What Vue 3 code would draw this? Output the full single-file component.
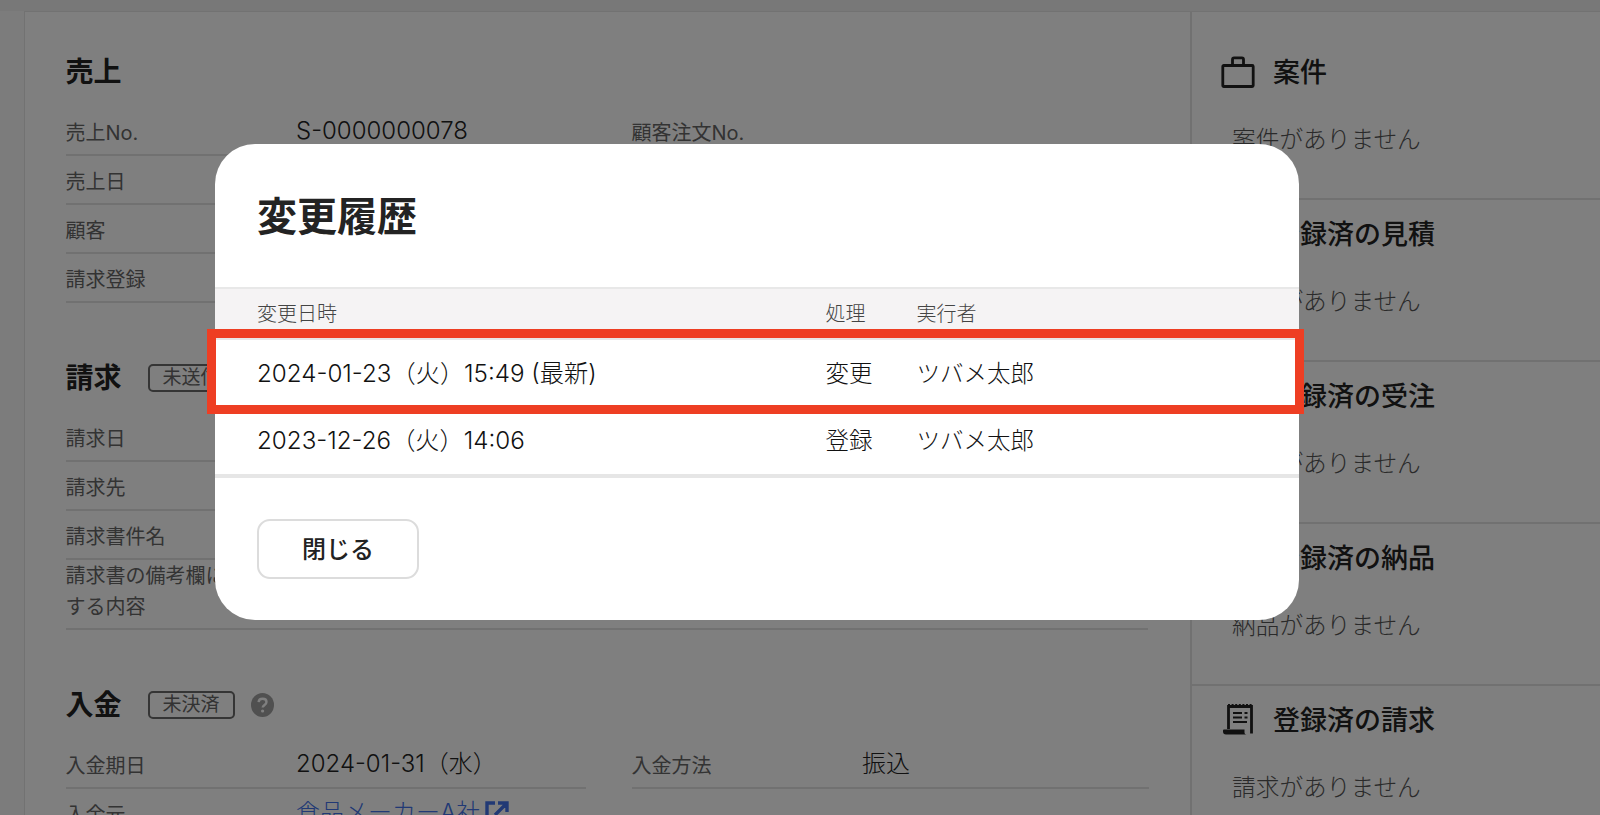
<script setup>
const historyRows = [
  { date: '2024-01-23（火）15:49 (最新)', action: '変更', user: 'ツバメ太郎', highlight: true },
  { date: '2023-12-26（火）14:06', action: '登録', user: 'ツバメ太郎', highlight: false },
]
const salesRows = [
  ['売上No.', 'S-0000000078', '顧客注文No.', ''],
  ['売上日', '2024-01-23（火）', '', ''],
  ['顧客', '食品メーカーA社', '', ''],
  ['請求登録', '済', '', ''],
]
const billRows = ['請求日', '請求先', '請求書件名']
const asideSections = [
  { title: '案件', empty: '案件がありません', icon: 'case' },
  { title: '登録済の見積', empty: '見積がありません', icon: '' },
  { title: '登録済の受注', empty: '受注がありません', icon: '' },
  { title: '登録済の納品', empty: '納品がありません', icon: '' },
  { title: '登録済の請求', empty: '請求がありません', icon: 'bill' },
]
</script>

<template>
  <div class="page">
    <div class="topstrip"></div>
    <div class="panel">
      <main class="main">
        <section class="block">
          <h2 class="head"><span>売上</span></h2>
          <div v-for="r in salesRows" :key="r[0]" class="pair">
            <div class="row"><span class="label">{{ r[0] }}</span><span class="value">{{ r[1] }}</span></div>
            <div class="row"><span class="label">{{ r[2] }}</span><span class="value">{{ r[3] }}</span></div>
          </div>
        </section>

        <section class="block">
          <h2 class="head"><span>請求</span><span class="badge">未送信</span></h2>
          <div v-for="b in billRows" :key="b" class="pair">
            <div class="row"><span class="label">{{ b }}</span></div>
            <div class="row"></div>
          </div>
          <div class="row wide tall">
            <span class="label multi">請求書の備考欄に記載する内容</span>
          </div>
        </section>

        <section class="block">
          <h2 class="head">
            <span>入金</span><span class="badge">未決済</span>
            <svg class="help" viewBox="0 0 23 24" aria-hidden="true">
              <ellipse cx="11.5" cy="12" rx="11.5" ry="12" fill="#a0a0a0" />
              <path d="M7.6 9.2c.2-2.2 1.8-3.4 4-3.4s3.9 1.2 3.9 3.2c0 2.9-3.8 2.9-3.8 5.6" fill="none" stroke="#fff" stroke-width="2.4" />
              <circle cx="11.6" cy="18" r="1.6" fill="#fff" />
            </svg>
          </h2>
          <div class="pair">
            <div class="row"><span class="label">入金期日</span><span class="value">2024-01-31（水）</span></div>
            <div class="row"><span class="label">入金方法</span><span class="value">振込</span></div>
          </div>
          <div class="pair">
            <div class="row">
              <span class="label">入金元</span>
              <span class="value link">食品メーカーA社
                <svg class="ext" viewBox="0 0 26 26" aria-hidden="true">
                  <path d="M11 3H3v20h20v-8M14 3h9v9M23 3 11 15" fill="none" stroke="currentColor" stroke-width="3.4" />
                </svg>
              </span>
            </div>
            <div class="row"></div>
          </div>
        </section>
      </main>

      <aside class="aside">
        <section v-for="s in asideSections" :key="s.title" class="side">
          <h3 class="side-head">
            <svg v-if="s.icon === 'case'" class="side-icon" viewBox="0 0 34 32" aria-hidden="true">
              <path d="M2.8 9.5h28.4a1 1 0 0 1 1 1v19a1 1 0 0 1-1 1H2.8a1 1 0 0 1-1-1v-19a1 1 0 0 1 1-1Z" fill="none" stroke="#222" stroke-width="2.8" />
              <path d="M11.5 9V3.4a1.6 1.6 0 0 1 1.6-1.6h7.8a1.6 1.6 0 0 1 1.6 1.6V9" fill="none" stroke="#222" stroke-width="2.8" />
            </svg>
            <svg v-else-if="s.icon === 'bill'" class="side-icon" viewBox="0 0 34 32" aria-hidden="true">
              <path d="M7.5 25V2.5h23v27" fill="none" stroke="#222" stroke-width="2.8" />
              <path d="M7 1.2h24" stroke="#222" stroke-width="2.4" stroke-dasharray="2 1.6" />
              <path d="M12 9h9M23.5 9h3M12 13.5h9M23.5 13.5h3M12 18h14" stroke="#222" stroke-width="2" />
              <path d="M3 25.5h20.5v3c0 1 .8 2 2 2H5a3 3 0 0 1-3-3v-1a1 1 0 0 1 1-1Z" fill="#222" />
            </svg>
            <span v-else class="side-icon"></span>
            <span class="side-title">{{ s.title }}</span>
          </h3>
          <p class="side-empty">{{ s.empty }}</p>
        </section>
      </aside>
    </div>

    <div class="overlay">
      <div class="dialog">
        <header class="dialog-head"><h1>変更履歴</h1></header>
        <div class="thead">
          <span>変更日時</span><span>処理</span><span>実行者</span>
        </div>
        <div
          v-for="h in historyRows"
          :key="h.date"
          class="trow"
          :class="{ first: h.highlight }"
        >
          <span class="stamp">{{ h.date }}</span><span class="cjk">{{ h.action }}</span><span class="cjk">{{ h.user }}</span>
          <i v-if="h.highlight" class="mark"></i>
        </div>
        <footer class="dialog-foot">
          <button class="close" type="button">閉じる</button>
        </footer>
      </div>
    </div>
  </div>
</template>

<style>
html, body { margin: 0; overflow: hidden; background: #f6f6f6; }
</style>

<style scoped>
* { box-sizing: border-box; }
.page {
  position: relative;
  height: 815px;
  overflow: hidden;
  padding-left: 24px;
  font-family: Inter, "Noto Sans CJK JP", sans-serif;
  color: #222;
  background: #f8f8f8;
}
.topstrip {
  height: 11px;
  margin-left: -24px;
  background: #f0f0f0;
}
.panel {
  display: flex;
  border-top: 1px solid #e4e4e4;
  border-left: 1px solid #e4e4e4;
  background: #fff;
  min-height: 803px;
}
.main {
  width: 1165px;
  flex: none;
  padding: 42px 42.5px 0 40.5px;
}
.block { margin-bottom: 57px; }
.head {
  display: flex;
  align-items: center;
  height: 36px;
  margin: 0 0 17px;
  font-size: 28px;
  font-weight: 700;
  line-height: 36px;
}
.badge {
  display: flex;
  align-items: center;
  justify-content: center;
  width: 87px;
  height: 28px;
  margin-left: 26px;
  border: 2px solid #6a6a6a;
  border-radius: 5px;
  font-size: 19px;
  font-weight: 400;
  color: #666;
}
.help { width: 23px; height: 24px; margin-left: 16px; }
.pair {
  display: grid;
  grid-template-columns: 520px 517px;
  column-gap: 46px;
}
.row {
  display: flex;
  align-items: center;
  height: 49px;
  border-bottom: 2px solid #e2e2e2;
}
.wide { width: 100%; }
.tall { height: 70px; }
.label {
  width: 230.5px;
  flex: none;
  padding-top: 6px;
  font-size: 20px;
  line-height: 31px;
  color: #666;
}
.multi {
  width: 200px;
  padding-top: 0;
  margin-top: -4px;
}
.value {
  font-size: 24px;
  font-weight: 300;
  line-height: 32px;
  color: #222;
  white-space: nowrap;
}
.link { color: #4272ea; display: flex; align-items: center; }
.ext { width: 26px; height: 26px; margin-left: 4px; }

.aside {
  flex: 1;
  padding-top: 26px;
  border-left: 2px solid #e2e2e2;
}
.side {
  height: 162px;
  padding: 16px 0 0 29px;
  border-bottom: 2px solid #e2e2e2;
}
.side:last-child { border-bottom: 0; }
.side-head {
  display: flex;
  align-items: center;
  height: 36px;
  margin: 0;
  font-size: 27px;
  font-weight: 500;
}
.side-title { margin-top: -3px; }
.side-icon {
  width: 34px;
  height: 32px;
  margin-right: 18px;
  flex: none;
}
.side-empty {
  margin: 33px 0 0 11px;
  font-size: 23.7px;
  font-weight: 300;
  line-height: 34px;
  color: #555;
}

.overlay {
  position: absolute;
  inset: 0;
  padding: 144px 0 0 215px;
  background: rgba(0, 0, 0, 0.5);
}
.dialog {
  width: 1084px;
  height: 476px;
  border-radius: 40px;
  background: #fff;
  display: flex;
  flex-direction: column;
}
.dialog-head {
  display: flex;
  align-items: center;
  height: 143px;
  padding: 0 42px 4px;
}
.dialog-head h1 {
  margin: 0;
  font-size: 40px;
  font-weight: 700;
  color: #232323;
}
.thead, .trow {
  display: grid;
  grid-template-columns: 568.5px 91px 1fr;
  align-items: center;
  padding: 0 42px;
}
.thead {
  height: 51px;
  padding-bottom: 2px;
  border-top: 2px solid #e8e8e8;
  background: #f5f3f4;
  font-size: 20px;
  font-weight: 300;
  color: #444;
}
.trow {
  position: relative;
  height: 68px;
  padding-bottom: 3px;
  font-weight: 300;
  color: #111;
  white-space: nowrap;
}
.stamp { font-size: 24.2px; }
.cjk { font-size: 23.5px; }
.first { border-top: 2px solid #e8e8e8; }
.mark {
  position: absolute;
  top: -11px;
  left: -8px;
  right: -5px;
  bottom: -8px;
  border: 9px solid #ee3e23;
}
.dialog-foot {
  flex: 1;
  padding: 41px 42px;
  border-top: 4px solid #e6e6e6;
}
.close {
  display: block;
  width: 162px;
  height: 60px;
  padding: 0 0 3px;
  border: 2px solid #dcdcdc;
  border-radius: 13px;
  background: #fff;
  font: 500 24px Inter, "Noto Sans CJK JP", sans-serif;
  color: #222;
}
</style>
